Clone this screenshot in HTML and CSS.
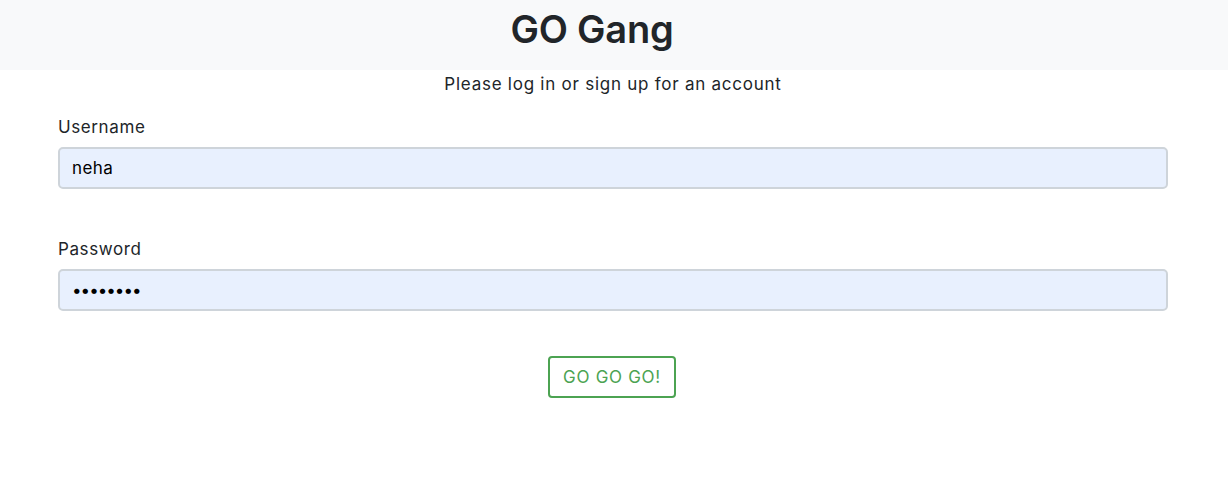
FILE: index.html
```html
<!DOCTYPE html>
<html>
<head>
<meta charset="utf-8">
<link rel="stylesheet" href="styles.css">
</head>
<body>
<header class="topbar">
  <h1 class="brand">GO Gang</h1>
</header>
<main class="container">
  <p class="intro">Please log in or sign up for an account</p>
  <form class="login">
    <div class="field">
      <label class="label" for="u">Username</label>
      <input class="input" id="u" type="text" value="neha">
    </div>
    <div class="field">
      <label class="label" for="p">Password</label>
      <input class="input input-pw" id="p" type="password" value="password">
    </div>
    <div class="actions">
      <button class="btn" type="button">GO GO GO!</button>
    </div>
  </form>
</main>
</body>
</html>
```
FILE: styles.css
```css
* { box-sizing: border-box; }
html, body { margin: 0; padding: 0; }
body {
  font-family: Inter, "Noto Sans", "Liberation Sans", sans-serif;
  color: #212529;
  background: #fff;
  font-size: 17px;
}
.topbar {
  height: 70px;
  background: #f8f9fa;
  display: flex;
  align-items: center;
  justify-content: center;
  padding-right: 44px;
}
.brand {
  margin: 0;
  font-size: 38px;
  font-weight: 600;
  line-height: 1;
  padding-bottom: 12px;
  letter-spacing: -0.2px;
}
.container {
  width: 1140px;
  margin: 0 auto;
  padding: 0 16px 0 14px;
}
.intro {
  margin: 2px 0 0;
  text-align: center;
  font-size: 17px;
  letter-spacing: 0.75px;
  line-height: 24px;
}
.login { margin-top: 19px; }
.field { margin-bottom: 48px; }
.label {
  display: block;
  font-size: 17px;
  letter-spacing: 0.6px;
  line-height: 24px;
  margin-bottom: 8px;
}
.input {
  display: block;
  width: 100%;
  height: 42px;
  border: 2px solid #ced4da;
  border-radius: 5px;
  background: #e8f0fe;
  padding: 0 12px;
  font-family: inherit;
  font-size: 17px;
  letter-spacing: 0.4px;
  color: #000;
}
.input-pw { letter-spacing: -1px; }
.actions {
  display: flex;
  justify-content: center;
  margin-top: -3px;
  padding-right: 2px;
}
.btn {
  width: 128px;
  height: 42px;
  border: 2px solid #4ca352;
  border-radius: 4px;
  background: #fff;
  color: #4ca352;
  font-family: inherit;
  font-size: 17px;
  letter-spacing: 0.7px;
}
```
